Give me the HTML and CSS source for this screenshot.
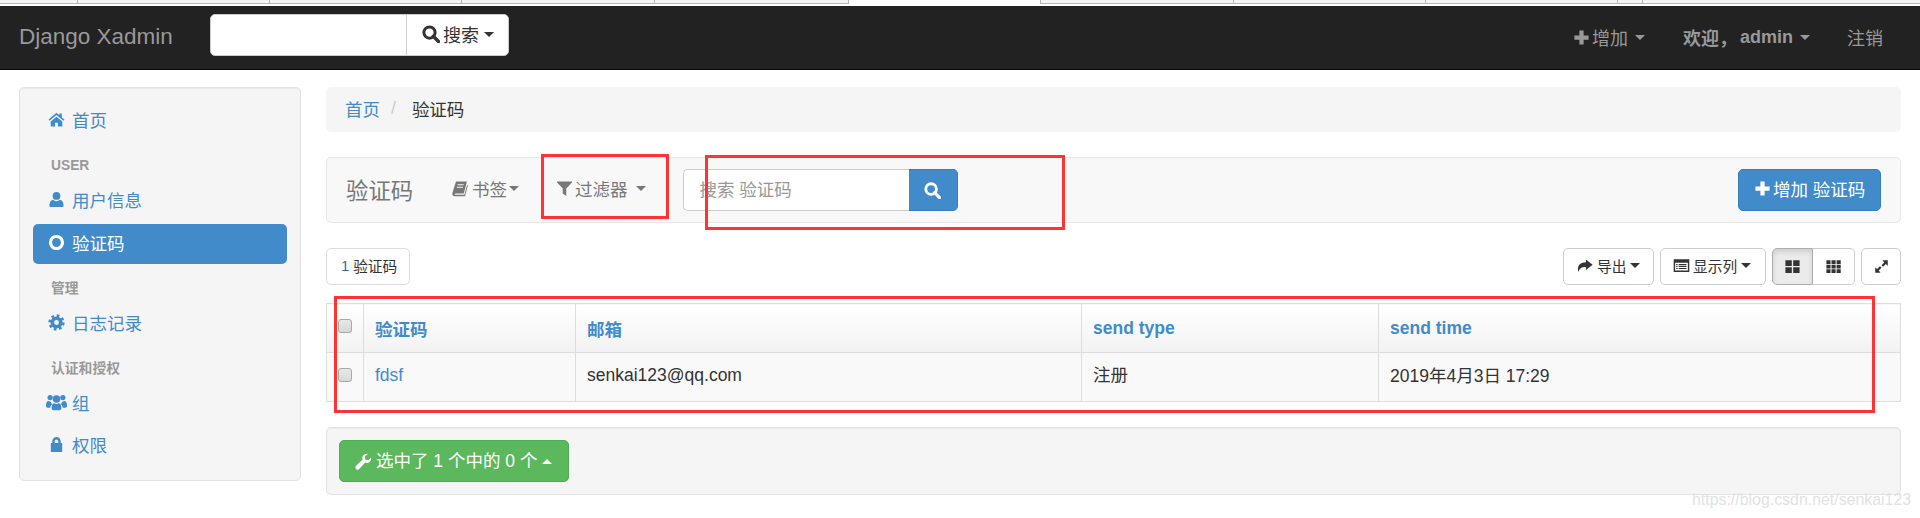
FILE: index.html
```html
<!DOCTYPE html>
<html lang="zh-CN">
<head>
<meta charset="utf-8">
<title>验证码 | Django Xadmin</title>
<link rel="stylesheet" href="styles.css">
</head>
<body>
<div class="tabstrip">
  <span class="tab t1"></span><span class="tab t2"></span><span class="tab t2"></span><span class="tab t3"></span><span class="tab t4"></span><span class="tab-active"></span><span class="tab t5"></span><span class="tab t6"></span><span class="tab t6"></span><span class="tab t7"></span><span class="tab t8"></span>
</div>
<header class="navbar">
  <a class="brand">Django Xadmin</a>
  <div class="nav-search">
    <div class="nav-search-input"></div>
    <div class="nav-search-btn">
      <svg class="ic ic-nsearch" viewBox="0 0 24 24"><circle cx="10" cy="10" r="7.5" fill="none" stroke="currentColor" stroke-width="4"/><path d="M15 15l7 7" stroke="currentColor" stroke-width="4.5" stroke-linecap="round"/></svg>
      <span>搜索</span><i class="caret"></i>
    </div>
  </div>
  <nav class="nav-right">
    <span class="nav-item nav-add">
      <svg class="ic ic-nplus" viewBox="0 0 24 24"><path d="M9 2h6v7h7v6h-7v7H9v-7H2V9h7z"/></svg>
      <span>增加</span><i class="caret"></i>
    </span>
    <span class="nav-item nav-user"><b>欢迎，</b><b class="admin">admin</b><i class="caret"></i></span>
    <span class="nav-item nav-out">注销</span>
  </nav>
</header>
<div class="page">
  <aside class="sidebar">
    <a class="side-item">
      <svg class="ic" viewBox="0 0 24 24"><path d="M12 2.5L.8 12l1.4 1.7L12 5.5l9.800 8.200 1.400-1.700L19.500 9V3.500h-3.500V6z"/><path d="M12 8L3.800 14.800V22H10v-5.500h4V22h6.200v-7.200z"/></svg>
      <span>首页</span>
    </a>
    <div class="side-head side-head-en">USER</div>
    <a class="side-item">
      <svg class="ic" viewBox="0 0 24 24"><circle cx="12" cy="7" r="5.500"/><path d="M3.500 22.500c-1 0-1.500-.8-1.500-2 0-4 1.500-7.500 5-8 1.300 1.300 3 2 5 2s3.700-.7 5-2c3.500.5 5 4 5 8 0 1.200-.5 2-1.500 2z"/></svg>
      <span>用户信息</span>
    </a>
    <a class="side-item side-active">
      <svg class="ic" viewBox="0 0 24 24"><circle cx="12" cy="12" r="8.500" fill="none" stroke="currentColor" stroke-width="4.500"/></svg>
      <span>验证码</span>
    </a>
    <div class="side-head">管理</div>
    <a class="side-item">
      <svg class="ic" viewBox="0 0 24 24"><circle cx="12" cy="12" r="6" fill="none" stroke="currentColor" stroke-width="5"/><circle cx="12" cy="12" r="9.500" fill="none" stroke="currentColor" stroke-width="4" stroke-dasharray="3.730 3.730"/></svg>
      <span>日志记录</span>
    </a>
    <div class="side-head">认证和授权</div>
    <a class="side-item side-wide">
      <svg class="ic" viewBox="0 0 28 24"><circle cx="5.500" cy="6" r="3.500"/><circle cx="22.500" cy="6" r="3.500"/><circle cx="14" cy="8" r="5"/><path d="M0 17c0-4 1-6.500 3.500-6.500 1 .8 2 1 3 1 .3 1.500 1 2.700 2 3.500-2 1-2.500 2.500-2.800 4.500H2c-1.300 0-2-1-2-2.500zM28 17c0-4-1-6.500-3.500-6.500-1 .8-2 1-3 1-.3 1.500-1 2.700-2 3.500 2 1 2.500 2.500 2.800 4.500H26c1.300 0 2-1 2-2.500zM7.500 20c0-3.500 1-6 3.500-6.500 1 .7 2 1 3 1s2-.3 3-1c2.500.5 3.500 3 3.500 6.500 0 2-1 3-2.500 3H10c-1.500 0-2.500-1-2.500-3z"/></svg>
      <span>组</span>
    </a>
    <a class="side-item">
      <svg class="ic" viewBox="0 0 24 24"><path d="M4 10h2V7.500a6 6 0 0 1 12 0V10h2v12.500H4zM9.500 10h5V7.500a2.500 2.500 0 0 0-5 0z" fill-rule="evenodd"/></svg>
      <span>权限</span>
    </a>
  </aside>
  <main class="content">
    <div class="crumbs"><a>首页</a><span class="crumb-sep">/</span><span class="crumb-cur">验证码</span></div>
    <div class="toolbar">
      <h1 class="tb-title">验证码</h1>
      <span class="tb-menu tb-book">
        <svg class="ic" viewBox="0 0 24 24"><path d="M7 2h15.500l-4.500 17H6.500c-1.500 0-1.700 1.800-.3 1.800H19l3.800-14 1 .8L19.800 23H5.500C2.500 23 1.500 20.500 2 18.500zM9.500 6l-.4 1.500h8.500l.4-1.500zM8.500 9.500l-.4 1.500h8.500l.4-1.500z" fill-rule="evenodd"/></svg>
        <span>书签</span><i class="caret"></i>
      </span>
      <span class="tb-menu tb-filter">
        <svg class="ic" viewBox="0 0 24 24"><path d="M1.500 2h21v1.500L14.500 12v10.500L9.500 19v-7L1.500 3.500z"/></svg>
        <span>过滤器</span><i class="caret"></i>
      </span>
      <div class="tb-search">
        <div class="tb-input">搜索 验证码</div>
        <div class="tb-go">
          <svg class="ic" viewBox="0 0 24 24"><circle cx="10" cy="10" r="7.500" fill="none" stroke="currentColor" stroke-width="4"/><path d="M15 15l7 7" stroke="currentColor" stroke-width="4.500" stroke-linecap="round"/></svg>
        </div>
      </div>
      <div class="tb-add">
        <svg class="ic" viewBox="0 0 24 24"><path d="M9 2h6v7h7v6h-7v7H9v-7H2V9h7z"/></svg>
        <span>增加 验证码</span>
      </div>
    </div>
    <div class="listbar">
      <span class="count"><span class="count-num">1</span> 验证码</span>
      <div class="listbar-right">
        <span class="btn btn-export">
          <svg class="ic" viewBox="0 0 24 24"><path d="M14 3.500l9.500 7.500-9.500 7.500V14C8 14 5 15.500 3.500 21 1 13 5 8 14 7.500z"/></svg>
          <span>导出</span><i class="caret"></i>
        </span>
        <span class="btn btn-cols">
          <svg class="ic" viewBox="0 0 24 24"><path d="M1 3h22v18H1zM3 8v11h18V8zM8 10h11v1.500H8zM8 12.700h11v1.500H8zM8 15.400h11v1.500H8zM4.500 10h2v1.500h-2zM4.500 12.700h2v1.500h-2zM4.500 15.400h2v1.500h-2z" fill-rule="evenodd"/></svg>
          <span>显示列</span><i class="caret"></i>
        </span>
        <span class="btn-group">
          <span class="btn btn-sq btn-on">
            <svg class="ic" viewBox="0 0 24 24"><path d="M2 3h9v8.300H2zM13 3h9v8.300h-9zM2 13h9v8.300H2zM13 13h9v8.300h-9z"/></svg>
          </span>
          <span class="btn btn-sq btn-th">
            <svg class="ic" viewBox="0 0 24 24"><path d="M2 3h5.800v5.300H2zM9.200 3H15v5.300H9.200zM16.400 3h5.800v5.300h-5.800zM2 9.500h5.800v5.300H2zM9.200 9.500H15v5.300H9.200zM16.400 9.500h5.800v5.300h-5.800zM2 16h5.800v5.300H2zM9.200 16H15v5.300H9.200zM16.400 16h5.800v5.300h-5.800z"/></svg>
          </span>
        </span>
        <span class="btn btn-full">
          <svg class="ic" viewBox="0 0 24 24"><path d="M13.500 2H22v9l-3-3-4.500 4.500-2.500-2.500L16.500 5.500zM10.500 22H2v-9l3 3 4.500-4.500 2.500 2.500L7.500 18.500z"/></svg>
        </span>
      </div>
    </div>
    <table class="grid">
      <colgroup><col class="c0"><col class="c1"><col class="c2"><col class="c3"><col></colgroup>
      <thead>
        <tr>
          <th class="cell-check"><i class="check"></i></th>
          <th><a>验证码</a></th><th><a>邮箱</a></th><th><a>send type</a></th><th><a>send time</a></th>
        </tr>
      </thead>
      <tbody>
        <tr>
          <td class="cell-check"><i class="check"></i></td>
          <td><a>fdsf</a></td><td>senkai123@qq.com</td><td class="cell-cjk">注册</td><td class="cell-date">2019年4月3日 17:29</td>
        </tr>
      </tbody>
    </table>
    <div class="actions">
      <span class="act-btn">
        <svg class="ic" viewBox="0 0 24 24"><path d="M22.800 6.500c.6 3.500-1.500 7-5 7.500-1.300.2-2.500 0-3.500-.5L6 22.500c-1.300 1.300-3.300 1.300-4.500.1-1.300-1.300-1.300-3.200 0-4.500l9.200-8.400c-.4-1-.6-2.200-.4-3.400C11 2.800 14.500.5 18 1.300l-4.200 4 .8 3.800 3.800 1z"/></svg>
        <span class="act-label">选中了 1 个中的 0 个</span><i class="caret caret-up"></i>
      </span>
    </div>
  </main>
</div>
<div class="mark mark-filter"></div>
<div class="mark mark-search"></div>
<div class="mark mark-table"></div>
<div class="watermark">https://blog.csdn.net/senkai123</div>
</body>
</html>
```
FILE: styles.css
```css
* { box-sizing: border-box; }
html, body { margin: 0; padding: 0; }
body {
  position: relative;
  height: 518px;
  overflow: hidden;
  background: #fff;
  color: #333;
  font-family: "Liberation Sans", "Noto Sans CJK SC", sans-serif;
  font-size: 17.5px;
}
a { color: #428bca; text-decoration: none; }
b { font-weight: 700; }
h1 { margin: 0; font-weight: 400; }

.ic { width: 17px; height: 17px; fill: currentColor; flex: none; display: block; }
.caret {
  display: inline-block;
  flex: none;
  width: 0; height: 0;
  margin-left: 5px;
  border-top: 5px solid currentColor;
  border-left: 5px solid transparent;
  border-right: 5px solid transparent;
}
.caret-up { border-top: 0; border-bottom: 5px solid currentColor; margin-left: 5px; }

/* browser tab remnants */
.tabstrip {
  height: 6px;
  display: flex;
  background: #fff;
}
.tab { height: 4px; border-bottom: 1px solid #b5b5b5; border-right: 1px solid #b5b5b5; background: #f4f4f4; }
.t1 { width: 78px; }
.t2 { width: 192px; }
.t3 { width: 193px; }
.t4 { width: 194px; }
.t5 { width: 194px; border-left: 1px solid #b5b5b5; }
.t6 { width: 192px; }
.t7 { width: 25px; }
.t8 { flex: 1; border-right: 0; }
.tab-active { width: 191px; }

/* navbar */
.navbar {
  height: 64px;
  display: flex;
  align-items: center;
  background: #222;
  border-bottom: 1px solid #080808;
  padding: 0 37px 1px 19px;
  color: #999;
}
.brand { color: #999; font-size: 22.5px; width: 191px; }
.nav-search {
  width: 299px;
  height: 42px;
  margin-bottom: 4px;
  display: flex;
  background: #fff;
  border-radius: 5px;
  color: #333;
  border: 1px solid #ccc;
}
.nav-search-input { width: 196px; border-right: 1px solid #ccc; }
.nav-search-btn { flex: 1; display: flex; align-items: center; padding: 0 0 2px 15px; font-size: 18px; }
.ic-nsearch { width: 18px; height: 18px; margin-right: 3px; }
.nav-right { margin-left: auto; display: flex; align-items: center; font-size: 18px; }
.nav-item { display: flex; align-items: center; }
.ic-nplus { margin-right: 2px; }
.nav-item .caret { margin-left: 7px; }
.nav-user { margin-left: 38px; }
.admin { margin-left: 3px; }
.nav-out { margin-left: 37px; }

/* page */
.page {
  display: flex;
  align-items: flex-start;
  gap: 25px;
  padding: 17px 19px 0;
}
.sidebar {
  width: 282px;
  height: 394px;
  flex: none;
  padding: 13px 13px 0;
  background: #f5f5f5;
  border: 1px solid #e3e3e3;
  border-radius: 5px;
  box-shadow: inset 0 1px 1px rgba(0,0,0,.05);
}
.side-item {
  height: 40px;
  display: flex;
  align-items: center;
  gap: 7px;
  margin-top: 2.5px;
  padding: 0 0 3px 15px;
  border-radius: 5px;
  color: #428bca;
}
.sidebar > .side-item:first-child { margin-top: 0; }
.side-wide { padding-left: 13px; gap: 5px; }
.side-wide .ic { width: 21px; height: 18px; }
.side-active { background: #428bca; color: #fff; }
.side-head {
  height: 20px;
  line-height: 22px;
  margin: 14px 0 6px;
  padding-left: 18px;
  color: #999;
  font-size: 13.800px;
  font-weight: 700;
}
.side-head + .side-item { margin-top: 0; }

.content { flex: 1; min-width: 0; }
.crumbs {
  height: 45px;
  display: flex;
  align-items: center;
  padding: 0 0 3px 19px;
  background: #f5f5f5;
  border-radius: 5px;
}
.crumb-sep { color: #ccc; margin: 0 16px 0 11px; }
.crumb-cur { color: #333; }

.toolbar {
  height: 66px;
  margin-top: 25px;
  display: flex;
  align-items: center;
  padding: 0 19px;
  background: #f8f8f8;
  border: 1px solid #e7e7e7;
  border-radius: 5px;
  color: #777;
}
.tb-title { font-size: 22.400px; width: 67px; color: #777; white-space: nowrap; padding-bottom: 3px; }
.tb-menu { display: flex; align-items: center; padding-bottom: 3px; }
.tb-menu .ic { margin-right: 4px; }
.tb-book { margin-left: 38px; }
.tb-book .caret { margin-left: 2px; }
.tb-filter { margin-left: 37px; }
.tb-filter .ic { margin-right: 2px; }
.tb-filter .caret { margin-left: 8px; }
.tb-search { display: flex; margin-left: 37px; height: 42px; }
.tb-input {
  width: 226px;
  display: flex;
  align-items: center;
  padding: 0 0 3px 16px;
  background: #fff;
  border: 1px solid #ccc;
  border-right: 0;
  border-radius: 5px 0 0 5px;
  color: #999;
}
.tb-go {
  width: 49px;
  display: flex;
  align-items: center;
  justify-content: center;
  background: #428bca;
  border: 1px solid #357ebd;
  border-left: 0;
  border-radius: 0 5px 5px 0;
  color: #fff;
}
.tb-add {
  margin-left: auto;
  width: 143px;
  height: 42px;
  display: flex;
  align-items: center;
  gap: 2px;
  padding: 0 0 3px 15px;
  background: #428bca;
  border: 1px solid #357ebd;
  border-radius: 5px;
  color: #fff;
}

.listbar {
  height: 37px;
  margin-top: 25px;
  display: flex;
  justify-content: space-between;
  font-size: 14.700px;
}
.count {
  width: 84px;
  display: flex;
  align-items: center;
  gap: 4px;
  padding: 0 0 2px 14px;
  border: 1px solid #ddd;
  border-radius: 5px;
}
.count-num { color: #31708f; }
.listbar-right { display: flex; gap: 6px; }
.btn {
  display: flex;
  align-items: center;
  background: #fff;
  border: 1px solid #ccc;
  border-radius: 5px;
  color: #333;
}
.btn-export { width: 91px; padding: 0 0 2px 12px; }
.btn-cols { width: 106px; padding: 0 0 2px 12px; }
.btn-export .ic { margin-right: 4px; }
.btn-cols .ic { margin-right: 3px; }
.btn .caret { margin-left: 4px; }
.btn-group { display: flex; }
.btn-sq { justify-content: center; width: 42px; }
.btn-on {
  width: 41px;
  background: #ebebeb;
  border-color: #adadad;
  border-radius: 5px 0 0 5px;
  box-shadow: inset 0 3px 5px rgba(0,0,0,.125);
}
.btn-th { border-left: 0; border-radius: 0 5px 5px 0; }
.btn-full { width: 40px; justify-content: center; }
.btn-full .ic { width: 15px; height: 15px; }

.grid {
  width: 100%;
  height: 99px;
  margin-top: 18px;
  table-layout: fixed;
  border-collapse: collapse;
}
.c0 { width: 37px; }
.c1 { width: 212px; }
.c2 { width: 506px; }
.c3 { width: 297px; }
.grid th, .grid td {
  border: 1px solid #ddd;
  padding: 0 0 0 11px;
  text-align: left;
  vertical-align: middle;
  height: 49px;
  font-size: 17.5px;
}
.grid th { background: linear-gradient(#fff, #f2f2f2); font-weight: 700; }
.grid td { background: #f9f9f9; }
.grid td:nth-child(n+2) { padding-bottom: 3px; }
.grid td.cell-cjk { padding-bottom: 8px; }
.grid td.cell-date { padding-bottom: 5px; }
.grid .cell-check { padding: 0 0 4px 11px; }
.check {
  display: block;
  width: 14px; height: 14px;
  background: linear-gradient(#e8e8e8, #d8d8d8);
  border: 1px solid #a8a8a8;
  border-radius: 3px;
}

.actions {
  height: 68px;
  margin-top: 25px;
  display: flex;
  align-items: center;
  padding-left: 12px;
  background: #f5f5f5;
  border: 1px solid #e3e3e3;
  border-radius: 5px;
  box-shadow: inset 0 1px 1px rgba(0,0,0,.05);
}
.act-btn {
  width: 230px;
  height: 42px;
  display: flex;
  align-items: center;
  padding-left: 15px;
  background: #5cb85c;
  border: 1px solid #4cae4c;
  border-radius: 5px;
  color: #fff;
}
.act-btn .ic { margin-right: 4px; }
.act-label { padding-bottom: 3px; }

/* annotations drawn over the screenshot */
.mark { position: absolute; border: 3px solid #ff3333; }
.mark-filter { left: 541px; top: 154px; width: 128px; height: 65px; }
.mark-search { left: 705px; top: 155px; width: 360px; height: 75px; }
.mark-table { left: 334px; top: 296px; width: 1541px; height: 117px; }
.watermark {
  position: absolute;
  left: 1692px;
  top: 491px;
  font-size: 15.900px;
  color: #e2e2e2;
}
```
